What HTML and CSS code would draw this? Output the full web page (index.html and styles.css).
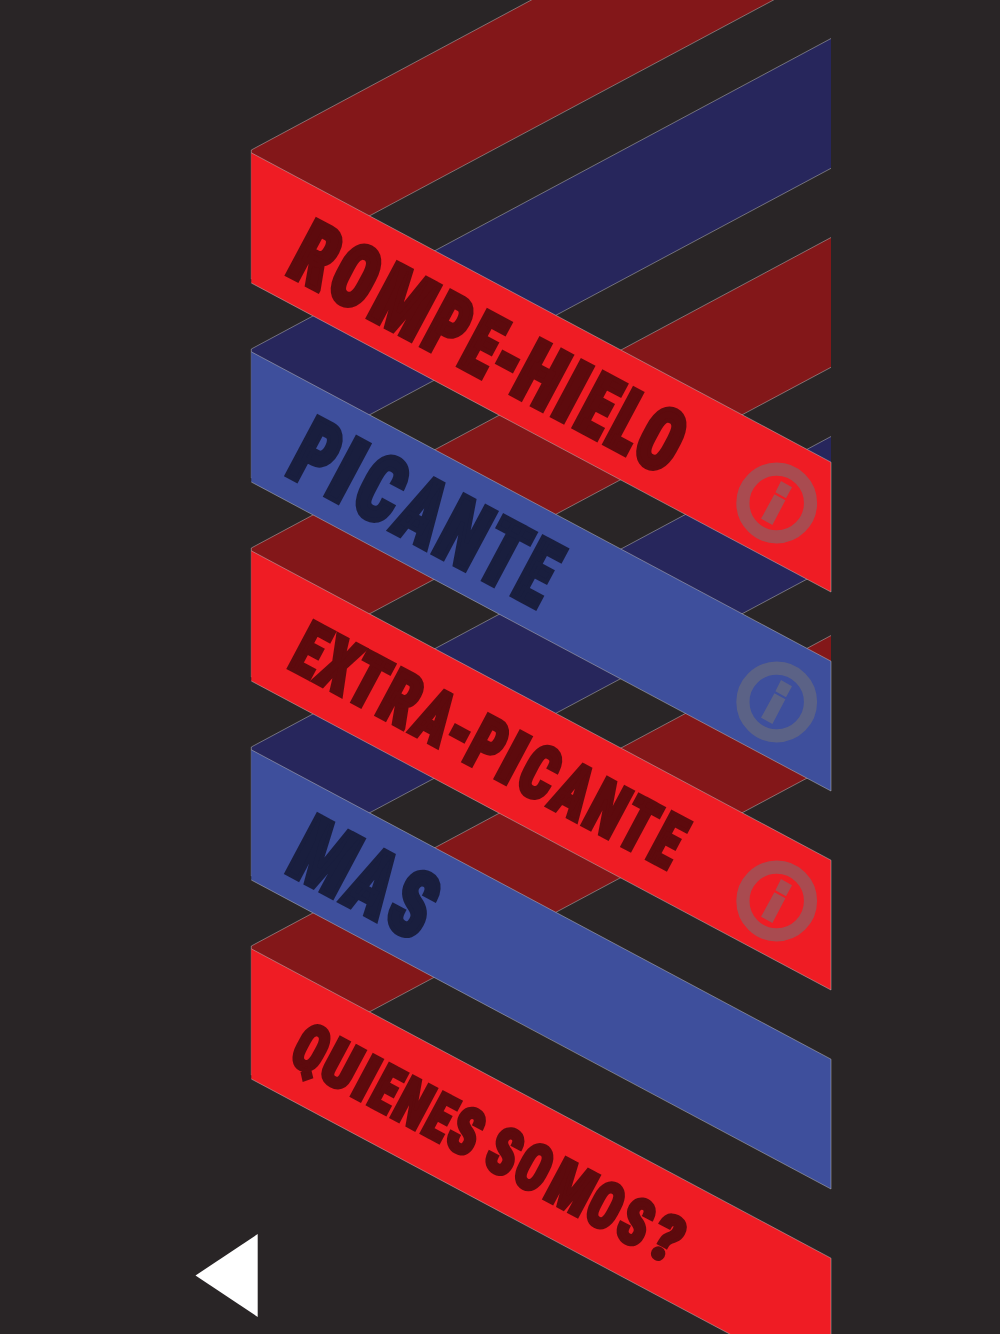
FILE: index.html
```html
<!DOCTYPE html>
<html lang="es">
  <head>
    <title>Menu</title>
    <meta charset="utf-8">
    <link rel="stylesheet" href="styles.css">
  </head>
  <body>
    <svg class="menu" viewBox="0 0 1000 1334">
      <defs>
        <!-- left open on the side that has no outline -->
        <path id="back" d="M831-160.5 251.3 150V279L831-30.7"/>
        <path id="front" d="M251.3 152.8 831 462.2V592L251.3 283"/>
        <g id="info">
          <circle r="33.8" fill="none" stroke="currentColor" stroke-width="13.2"/>
          <path fill="currentColor" d="M4.3-22 15.3-15.7 9.3-4.7-1.3-10.7ZM-2.3-8.7 8.7-2.7-4.3 22-15.7 15.7Z"/>
        </g>
      </defs>

      <!-- back side of the ribbon -->
      <use class="edge red-dark" href="#back"/>
      <use class="edge blue-dark" href="#back" y="199"/>
      <use class="edge red-dark" href="#back" y="398"/>
      <use class="edge blue-dark" href="#back" y="597"/>
      <use class="edge red-dark" href="#back" y="796"/>

      <!-- front side -->
      <use class="edge red" href="#front"/>
      <use class="edge blue" href="#front" y="199"/>
      <use class="edge red" href="#front" y="398"/>
      <use class="edge blue" href="#front" y="597"/>
      <use class="edge red" href="#front" y="796"/>

      <!-- labels, the glyphs are fitted by menu.js -->
      <text id="l0" class="label on-red" transform="translate(284.7 275.7) rotate(28.07)">ROMPE-HIELO</text>
      <text id="l1" class="label on-blue" transform="translate(284 476.3) rotate(28.07)">PICANTE</text>
      <text id="l2" class="label on-red" transform="translate(286.3 669) rotate(28.07)">EXTRA-PICANTE</text>
      <text id="l3" class="label on-blue" transform="translate(284 874) rotate(28.07)">MAS</text>
      <text id="l4" class="label on-red" transform="translate(286.7 1063.3) rotate(28.07)">QUIENES SOMOS?</text>

      <use class="info-red" href="#info" x="776.7" y="503"/>
      <use class="info-blue" href="#info" x="776.7" y="702"/>
      <use class="info-red" href="#info" x="776.7" y="901"/>

      <polygon class="prev" points="257.7,1234 257.7,1317 195.5,1275.5"/>
    </svg>

    <script src="menu.js"></script>
  </body>
</html>
```
FILE: menu.js
```js
var ctx = document.createElement('canvas').getContext('2d');

// spans holds the left and right edge of each glyph along the baseline
function fit(id, cap, stroke, spans) {
  var elm = document.getElementById(id), s = elm.textContent,
    size = (cap - stroke) / 0.711, i, m, k, left, right, span;
  ctx.font = '900 ' + size + 'px "Roboto Condensed"';
  elm.textContent = '';
  elm.style.fontSize = size + 'px';
  elm.style.strokeWidth = stroke + 'px';
  for (i = 0; i < s.length; ++i) {
    m = ctx.measureText(s[i]);
    left = spans[i * 2];
    right = spans[i * 2 + 1];
    // the outline is squeezed together with the glyph
    k = s[i] === ' ' ? 1 : (right - left) / (m.actualBoundingBoxRight + m.actualBoundingBoxLeft + stroke);
    span = document.createElementNS('http://www.w3.org/2000/svg', 'tspan');
    span.setAttribute('x', left + (m.actualBoundingBoxLeft + stroke / 2) * k);
    span.setAttribute('y', -stroke / 2);
    span.setAttribute('textLength', m.width * k);
    span.setAttribute('lengthAdjust', 'spacingAndGlyphs');
    span.textContent = s[i];
    elm.appendChild(span);
  }
}

fit('l0', 66.8, 5, [-0.5, 39.5, 43, 83.5, 90.9, 144.4, 151.5, 187, 193.4, 223.7, 226, 248,
  252.8, 293, 299.1, 317.1, 324.1, 354.5, 358.9, 386.8, 389.2, 429.3]);
fit('l1', 70.6, 5, [-0.5, 38, 43.6, 62.5, 71.5, 113, 115.8, 162, 165, 206.3, 210.5, 250.8, 254.7, 286.5]);
fit('l2', 57, 4.2, [-0.5, 27, 26.8, 63.3, 61.5, 95.8, 98.7, 133.7, 135.2, 172.4, 173.4, 192.5,
  197.3, 229.3, 234, 249.9, 255.5, 289.6, 292.3, 330, 332.2, 365.7, 368, 400.8, 405.4, 431.5]);
fit('l3', 70.4, 5, [-0.5, 56.7, 59.5, 105.9, 109, 148]);
fit('l4', 49.8, 3.8, [-0.5, 30.2, 33.5, 65.7, 70.4, 84.8, 89.1, 113.5, 115.7, 146.2, 150, 173.8, 175.3, 205.3,
  208, 216, 218.9, 249, 251.5, 282.8, 289.1, 330.4, 333, 364, 367.8, 398, 403, 432.5]);
```
FILE: styles.css
```css
body {
  margin: 0;
  padding: 0;
  background: #292526;
}

.menu {
  display: block;
  width: 1000px;
  height: 1334px;
}

/* Ribbon. */
.edge {
  stroke: #bbb;
  stroke-opacity: .5;
  stroke-width: 1px;
}
.red { fill: #ef1c24; }
.blue { fill: #3e4f9c; }
.red-dark { fill: #831719; }
.blue-dark { fill: #27265c; }

/* Labels. */
.label {
  font-family: "Roboto Condensed", Roboto, sans-serif;
  font-weight: 900;
}
.on-red { fill: #5d0a0d; stroke: #5d0a0d; }
.on-blue { fill: #191e3e; stroke: #191e3e; }

/* Icons. */
.info-red { color: #a94b50; }
.info-blue { color: #5b6286; }
.prev { fill: #fff; }
```
